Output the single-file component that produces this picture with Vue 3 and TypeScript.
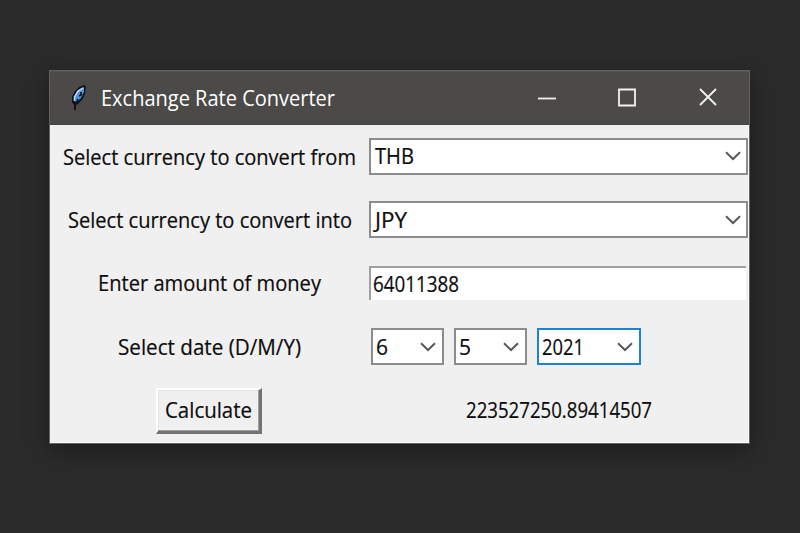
<script setup lang="ts">
import { h } from 'vue'

interface LineProps { text: string; width: number }

// A single line of UI text fitted to a given advance width.
const Line = (props: LineProps) =>
  h('svg', { class: 'line', width: props.width, height: 28 }, [
    h('text', { x: 0, y: 21.8, textLength: props.width, lengthAdjust: 'spacingAndGlyphs' }, props.text),
  ])
Line.props = ['text', 'width']

const Chevron = () =>
  h('svg', { class: 'chevron', width: 16, height: 10, viewBox: '0 0 16 10' }, [
    h('path', { d: 'M1 1.2 8 8 15 1.2' }),
  ])

const currencies = [
  { label: 'Select currency to convert from', labelWidth: 293, value: 'THB', valueWidth: 39 },
  { label: 'Select currency to convert into', labelWidth: 284, value: 'JPY', valueWidth: 32 },
]

const dateParts = [
  { name: 'day', value: '6', width: 12 },
  { name: 'month', value: '5', width: 12 },
  { name: 'year', value: '2021', width: 42 },
]
</script>

<template>
  <main class="desktop">
    <section class="window">
      <header class="titlebar">
        <svg class="feather" width="17" height="28" viewBox="0 0 17 28">
          <path class="quill" d="M4 26V21L2 18V13L5 7 9 3 14 1 16 2 15 10 12 16 8 20 6 21V26Z" />
          <path class="vane" d="M4.5 17V13L8 7 14 3V8L11 14 7 18Z" />
          <path class="light" d="M4.5 17V13L8 7 13 4" />
          <path class="rib" d="M6 20 8 15M9 12 11 11V8" />
        </svg>
        <Line class="title" text="Exchange Rate Converter" :width="234" />
        <div class="controls">
          <svg width="80" height="52" viewBox="0 0 80 52"><path d="M29 26.5H47" /></svg>
          <svg width="80" height="52" viewBox="0 0 80 52"><path d="M30 17.5H46V33.5H30Z" /></svg>
          <svg width="80" height="52" viewBox="0 0 80 52"><path d="M31 17 47 33M47 17 31 33" /></svg>
        </div>
      </header>

      <div class="form">
        <template v-for="c in currencies" :key="c.label">
          <div class="label"><Line :text="c.label" :width="c.labelWidth" /></div>
          <div class="field">
            <div class="combo"><Line :text="c.value" :width="c.valueWidth" /><Chevron /></div>
          </div>
        </template>

        <div class="label"><Line text="Enter amount of money" :width="223" /></div>
        <div class="field"><div class="entry"><Line text="64011388" :width="86" /></div></div>

        <div class="label"><Line text="Select date (D/M/Y)" :width="183" /></div>
        <div class="field dates">
          <div v-for="d in dateParts" :key="d.name" class="combo" :class="d.name">
            <Line :text="d.value" :width="d.width" /><Chevron />
          </div>
        </div>

        <div class="label"><button class="calculate" type="button"><Line text="Calculate" :width="87" /></button></div>
        <div class="field result"><Line text="223527250.89414507" :width="186" /></div>
      </div>
    </section>
  </main>
</template>

<style>
body {
  margin: 0;
  overflow: hidden;
  background: #2b2b2b;
}
</style>

<style scoped>
.desktop {
  box-sizing: border-box;
  width: 800px;
  height: 533px;
  padding: 70px 0 0 49px;
  background: #2b2b2b;
  font-family: "Open Sans", "Noto Sans", sans-serif;
}
.window {
  box-sizing: border-box;
  width: 701px;
  height: 374px;
  border: 1px solid #636361;
  background: #f0f0f0;
  box-shadow: 0 6px 24px rgba(0, 0, 0, 0.38);
}
.titlebar {
  box-sizing: border-box;
  display: flex;
  align-items: center;
  height: 54px;
  padding-left: 20px;
  border-top: 1px solid #545350;
  border-bottom: 1px solid #454442;
  background: #4c4a48;
}
.feather {
  margin-right: 14px;
}
.feather path { fill: none; }
.feather .quill { fill: #101216; }
.feather .vane { fill: #4a92dc; }
.feather .light { stroke: #b4d9f5; stroke-width: 1.6; }
.feather .rib { stroke: #101820; stroke-width: 1.8; }
:deep(.line) {
  display: block;
  flex: none;
  overflow: visible;
}
:deep(.line text) {
  font-size: 21px;
  fill: #0c0c0c;
  stroke: #0c0c0c;
  stroke-width: 0.2px;
}
.titlebar :deep(.line text) {
  fill: #fff;
  stroke: none;
}
.controls {
  display: flex;
  margin-left: auto;
}
.controls path {
  fill: none;
  stroke: #f2f2f2;
  stroke-width: 1.8;
}
.form {
  box-sizing: border-box;
  display: grid;
  grid-template-columns: 319px 379px;
  grid-template-rows: repeat(5, 63.4px);
  height: 318px;
  border: solid #fafafa;
  border-width: 0 1px 1px 0;
}
.label {
  display: flex;
  align-items: center;
  justify-content: center;
}
.field {
  display: flex;
  align-items: center;
}
.combo {
  box-sizing: border-box;
  display: flex;
  align-items: center;
  justify-content: space-between;
  width: 379px;
  height: 37px;
  padding: 0 5px 0 4px;
  border: 2px solid #8c8c8c;
  background: #fff;
}
.combo :deep(path) {
  fill: none;
  stroke: #5a5a5a;
  stroke-width: 2;
}
.field > .combo:only-child {
  margin-top: -1px;
}
.entry {
  box-sizing: border-box;
  display: flex;
  align-items: center;
  width: 377px;
  height: 34px;
  margin-top: -1px;
  padding-left: 2px;
  border: solid #a0a0a0;
  border-width: 2px 0 0 2px;
  background: #fff;
}
.dates {
  gap: 10px;
  padding-left: 2px;
}
.day, .month { width: 73px; }
.year {
  width: 104px;
  border-color: #1883d7;
}
.dates .combo { padding: 0 6px 0 3px; }
.calculate {
  box-sizing: border-box;
  display: flex;
  align-items: center;
  justify-content: center;
  width: 106px;
  height: 46px;
  margin: 1px 1px 0 0;
  padding: 0;
  border: solid;
  border-width: 2px 3px 3px 2px;
  border-color: #fff #737373 #737373 #fff;
  background: #f0f0f0;
  box-shadow: inset -1px -1px #a0a0a0, inset 1px 1px #e3e3e3;
  font: inherit;
}
.result {
  justify-content: center;
  padding-left: 1px;
}
</style>
